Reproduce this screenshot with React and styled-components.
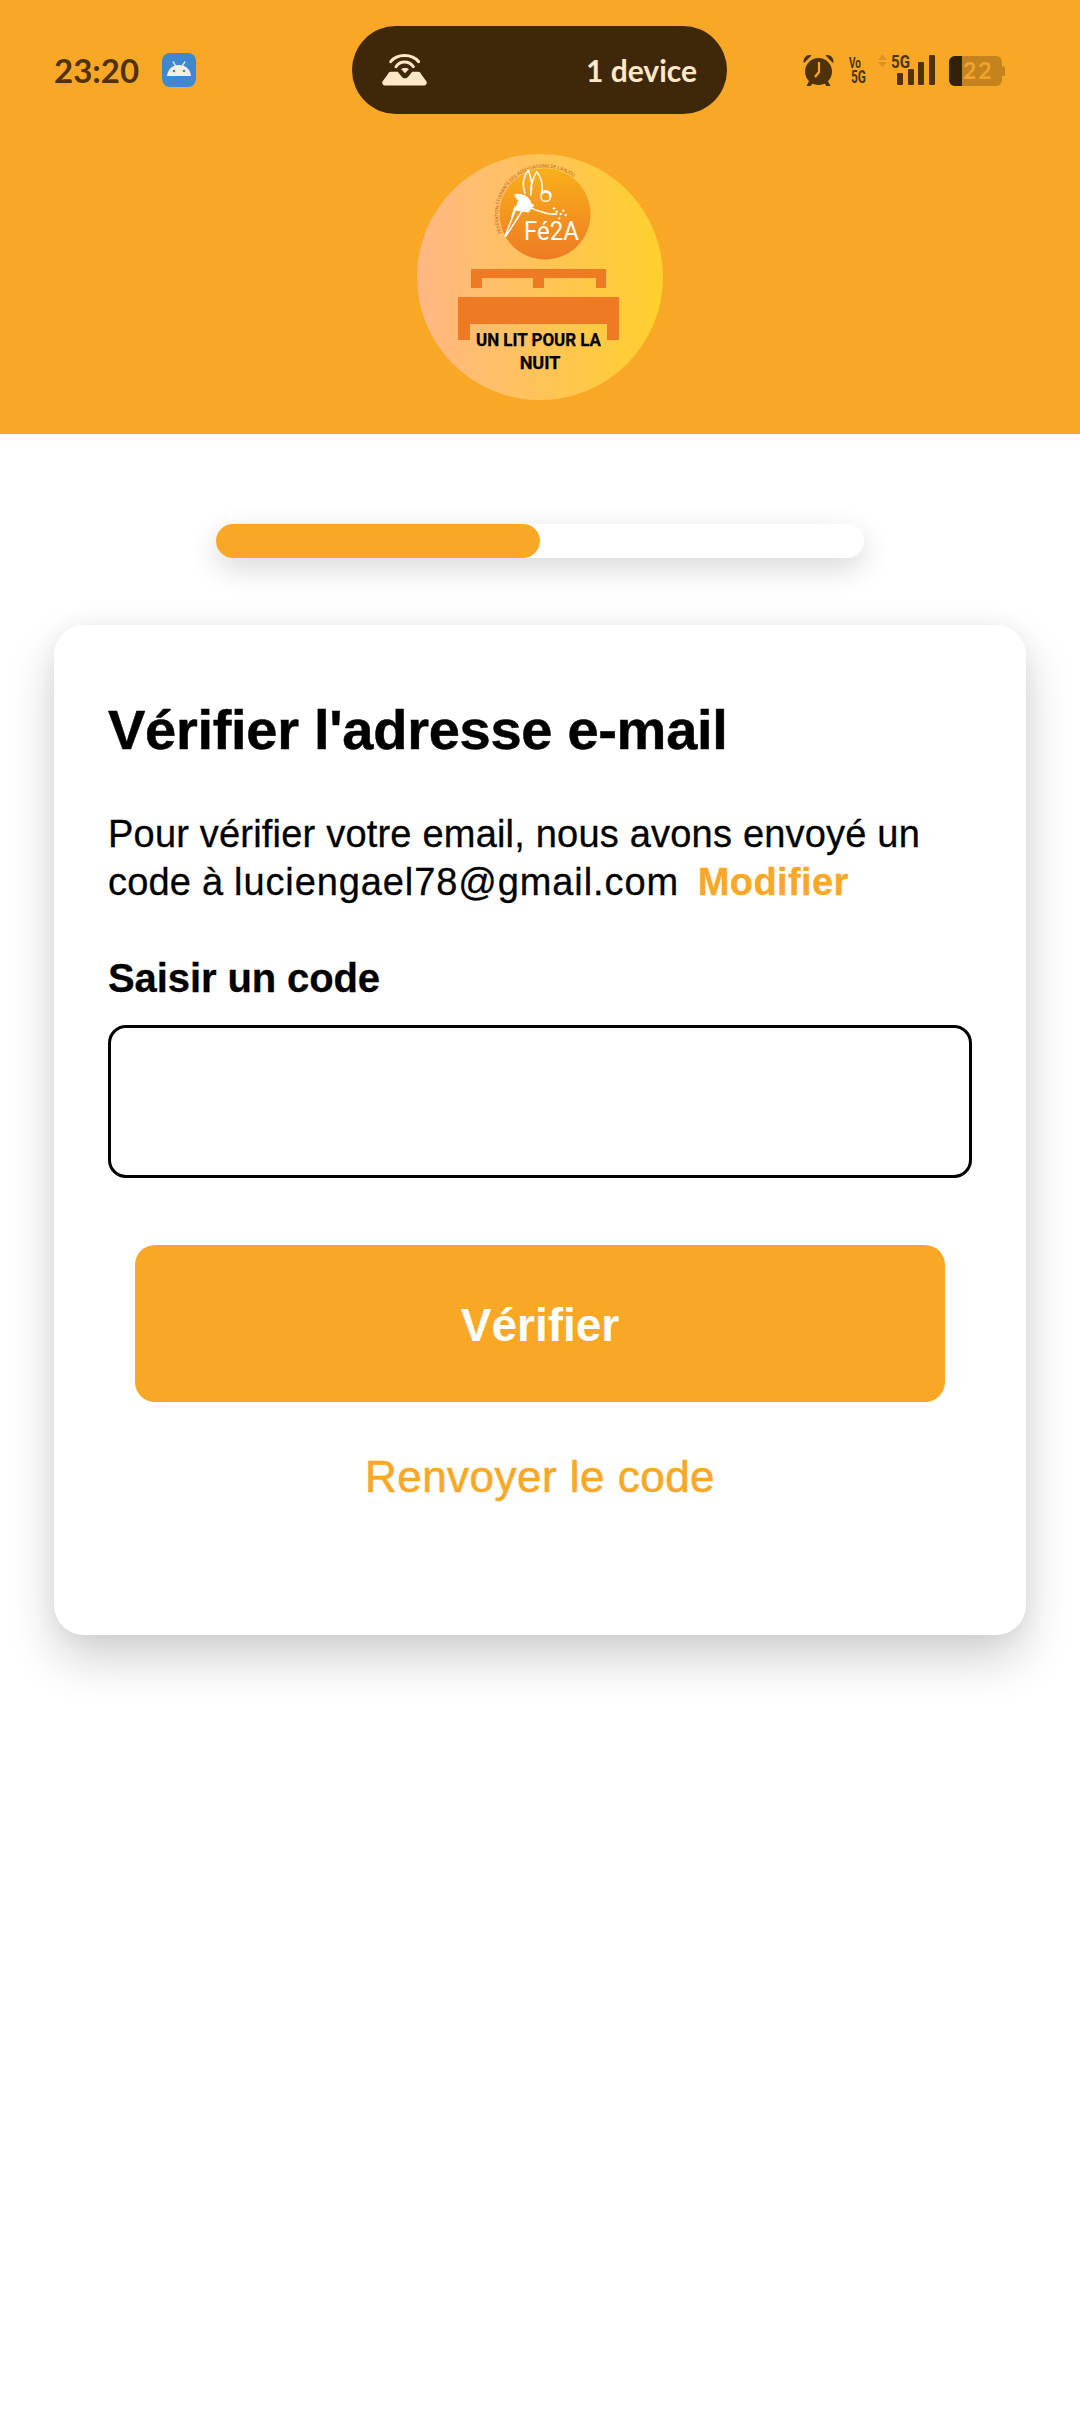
import React from 'react';
import styled, { createGlobalStyle } from 'styled-components';

const ORANGE = '#F9A826';

const Global = createGlobalStyle`
  html, body { margin: 0; padding: 0; background: #fff; }
  * { box-sizing: border-box; }
  body { font-family: "Liberation Sans", Arial, sans-serif; color: #000; }
`;
const Page = styled.div`
  width: 1080px;
  height: 2412px;
  overflow: hidden;
  background: #fff;
`;
const Header = styled.header`
  height: 434px;
  background: ${ORANGE};
  padding-top: 26px;
  display: flex;
  flex-direction: column;
  align-items: center;
`;
const StatusBar = styled.div`
  width: 100%;
  height: 88px;
  display: grid;
  grid-template-columns: 352px 375px 1fr;
  align-items: center;
`;
const StatusLeft = styled.div`
  display: flex;
  align-items: center;
  padding-left: 54px;
  gap: 24px;
`;
const Clock = styled.span`
  font-family: "Lato", sans-serif;
  font-weight: 700;
  font-size: 33px;
  line-height: 40px;
  color: #4f3208;
  width: 84px;
  white-space: nowrap;
`;
const AppBadge = styled.div`
  width: 34px;
  height: 34px;
  border-radius: 8px;
  background: #3f88d0;
  display: flex;
  align-items: center;
  justify-content: center;
`;
const Pill = styled.div`
  height: 88px;
  border-radius: 44px;
  background: #3f2809;
  display: flex;
  align-items: center;
  justify-content: space-between;
  padding: 0 30px;
  color: #ffe8c8;
`;
const PillText = styled.span`
  font-family: "Lato", sans-serif;
  font-weight: 700;
  font-size: 30px;
`;
const StatusRight = styled.div`
  display: flex;
  align-items: center;
  padding-left: 76px;
`;
const Logo = styled.svg`
  display: block;
  margin-top: 40px;
`;
const Main = styled.main`
  display: flex;
  flex-direction: column;
  align-items: center;
  padding-top: 90px;
`;
const Track = styled.div`
  width: 648px;
  height: 34px;
  border-radius: 17px;
  background: #fff;
  box-shadow: 0 10px 30px rgba(0, 0, 0, 0.16);
`;
const Fill = styled.div`
  width: 50%;
  height: 100%;
  border-radius: 17px;
  background: ${ORANGE};
`;
const Card = styled.section`
  margin-top: 67px;
  width: 972px;
  height: 1010px;
  border-radius: 30px;
  background: #fff;
  box-shadow: 0 24px 48px rgba(0, 0, 0, 0.18), 0 0 24px rgba(0, 0, 0, 0.05);
  padding: 75px 54px 0;
  display: flex;
  flex-direction: column;
`;
const Title = styled.h1`
  margin: 0;
  font-size: 56px;
  line-height: 60px;
  font-weight: 700;
  letter-spacing: -0.28px;
  -webkit-text-stroke: 0.5px #000;
`;
const Para = styled.p`
  margin: 50px 0 0;
  font-size: 38px;
  line-height: 48px;
  font-weight: 400;
  letter-spacing: 0.2px;
  -webkit-text-stroke: 0.3px;
`;
const Email = styled.span`
  letter-spacing: 0.9px;
`;
const Link = styled.a`
  color: ${ORANGE};
  font-weight: 700;
  letter-spacing: 0.4px;
  margin-left: 8px;
`;
const Label = styled.label`
  margin-top: 47px;
  font-size: 40px;
  line-height: 50px;
  font-weight: 700;
  letter-spacing: -0.1px;
  -webkit-text-stroke: 0.3px #000;
`;
const Field = styled.div`
  margin-top: 22px;
  width: 864px;
  height: 153px;
  border: 3px solid #000;
  border-radius: 18px;
`;
const Primary = styled.div`
  margin: 67px auto 0;
  width: 810px;
  height: 157px;
  padding-top: 2px;
  border-radius: 20px;
  background: ${ORANGE};
  color: #fff;
  font-size: 46px;
  font-weight: 700;
  display: flex;
  align-items: center;
  justify-content: center;
`;
const Resend = styled.div`
  margin-top: 45px;
  text-align: center;
  color: ${ORANGE};
  font-size: 44px;
  line-height: 60px;
  letter-spacing: 0.48px;
  -webkit-text-stroke: 0.6px ${ORANGE};
`;
const BarIcons = styled.svg`
  margin-left: 15px;
`;
const BatteryIcon = styled.svg`
  margin-left: 13px;
  margin-top: 2px;
`;

const Android = () => (
  <svg width="26" height="18" viewBox="0 0 26 18">
    <path d="M1 15C1.500 8.500 6.500 4 13 4S24.500 8.500 25 15z" fill="#f5efe0" />
    <path d="M7 .5l3 5M19 .5l-3 5" stroke="#f5efe0" strokeWidth="1.400" fill="none" />
    <circle cx="8" cy="10" r="1.300" fill="#3f88d0" />
    <circle cx="18" cy="10" r="1.300" fill="#3f88d0" />
  </svg>
);

const Hotspot = () => (
  <svg width="45" height="34" viewBox="0 0 45 34">
    <path d="M8.700 8.700C15 .5 30 .5 36.700 8.700" stroke="#ffe8c8" strokeWidth="3" fill="none" strokeLinecap="round" />
    <path d="M14 13.700C18 7.500 27 7.500 31.300 13.700" stroke="#ffe8c8" strokeWidth="3" fill="none" strokeLinecap="round" />
    <path d="M19 16c2-1.500 6-1.500 8 0l-4 4.300z" fill="#ffe8c8" />
    <path d="M9 18.700H15.700C18 21 20 25.300 23 25.300S28 21 30.300 18.700H36C37.500 18.700 38.500 19.500 39 21L44.500 28.500C45.300 30.500 44 32.500 42 32.500H3C1 32.500-.3 30.500.5 28.500L6 21C6.500 19.500 7.500 18.700 9 18.700z" fill="#ffe8c8" />
  </svg>
);

const Alarm = () => (
  <svg width="31" height="33" viewBox="0 0 31 33">
    <circle cx="15.500" cy="17.500" r="13.500" fill="#4f3208" />
    <path d="M16 8v10l-4 5" stroke="#f9a826" strokeWidth="2.200" fill="none" />
    <path d="M.5 8C.5 3 4.500 0 8.500 1.500L1 9zM30.500 8c0-5-4-8-8-6.500L30 9z" fill="#4f3208" />
    <path d="M6 27l-2.500 5h4L10 29zM25 27l2.500 5h-4L21 29z" fill="#4f3208" />
  </svg>
);

const Network = () => (
  <BarIcons width="87" height="34" viewBox="0 0 87 34">
    <text x="0" y="15" fontFamily="Roboto, sans-serif" fontWeight="700" fontSize="15.500" fill="#4f3208" textLength="12" lengthAdjust="spacingAndGlyphs">Vo</text>
    <text x="2" y="30" fontFamily="Roboto, sans-serif" fontWeight="700" fontSize="18" fill="#4f3208" textLength="15" lengthAdjust="spacingAndGlyphs">5G</text>
    <path d="M29 7l4.500-5.500L38 7zM29 9l4.500 5.500L38 9z" fill="#dc9322" />
    <text x="42" y="15" fontFamily="Roboto, sans-serif" fontWeight="700" fontSize="18" fill="#4f3208" textLength="19" lengthAdjust="spacingAndGlyphs">5G</text>
    <rect x="48" y="20" width="6" height="12" rx="1" fill="#4f3208" />
    <rect x="59" y="16" width="6" height="16" rx="1" fill="#4f3208" />
    <rect x="69" y="9" width="6" height="23" rx="1" fill="#4f3208" />
    <rect x="80" y="2" width="6" height="30" rx="1" fill="#4f3208" />
  </BarIcons>
);

const Battery = () => (
  <BatteryIcon width="56" height="30" viewBox="0 0 56 30">
    <rect x="0" y="0" width="53" height="30" rx="6" fill="#c4831c" />
    <rect x="53" y="10" width="3" height="10" rx="1.500" fill="#c4831c" />
    <path d="M6 0h7v30H6a6 6 0 0 1-6-6V6a6 6 0 0 1 6-6z" fill="#33200a" />
    <text x="14" y="23" fontFamily="Lato, sans-serif" fontWeight="700" fontSize="23" fill="#f0a52a" letterSpacing="2">22</text>
  </BatteryIcon>
);

const LogoArt = () => (
  <Logo width="246" height="246" viewBox="0 0 246 246">
    <defs>
      <linearGradient id="disc" x1="0" x2="1" y1="0" y2="0">
        <stop offset="0" stopColor="#ffb785" />
        <stop offset="1" stopColor="#ffd02c" />
      </linearGradient>
      <linearGradient id="ball" x1="0" x2="0" y1="0" y2="1">
        <stop offset="0" stopColor="#f9b01a" />
        <stop offset="1" stopColor="#ee7b24" />
      </linearGradient>
      <path id="arc" d="M85 79 A 47 47 0 0 1 164 30" />
    </defs>
    <circle cx="123" cy="123" r="123" fill="url(#disc)" />
    <circle cx="128" cy="60" r="45.500" fill="url(#ball)" />
    <text fontFamily="Roboto, sans-serif" fontSize="4.700" fill="#c05a1e">
      <textPath href="#arc">FÉDÉRATION ÉTUDIANTE DES ASSOCIATIONS DE L'ANJOU</textPath>
    </text>
    <g transform="translate(-17 -14) scale(.3333)" stroke="#fff" strokeWidth="4.500" strokeLinejoin="round" strokeLinecap="round" fill="none">
      <path d="M375 160C365 135 370 110 385 90C395 115 398 140 392 165" />
      <path d="M392 150C395 125 402 110 410 95C425 115 430 135 425 155" />
      <path d="M345 165C365 160 385 170 392 190C375 195 355 185 345 165z" fill="#fff" />
      <path d="M355 185L400 195L385 215L350 210z" fill="#fff" />
      <path d="M315 288L352 195L368 210L318 288z" />
      <path d="M345 200L335 235" />
      <circle cx="437" cy="170" r="14" />
      <path d="M425 160C432 150 450 152 452 168" strokeWidth="7" />
      <path d="M395 205C420 215 445 225 470 222" />
      <g fill="#fff" stroke="none">
        <circle cx="462" cy="205" r="3.500" />
        <circle cx="470" cy="215" r="3.500" />
        <circle cx="482" cy="222" r="3.500" />
        <circle cx="490" cy="212" r="3.500" />
        <circle cx="497" cy="225" r="3.500" />
        <circle cx="478" cy="235" r="3.500" />
      </g>
    </g>
    <text x="107" y="86" fontFamily="Roboto, sans-serif" fontSize="26" fontWeight="400" fill="#fff" textLength="55" lengthAdjust="spacingAndGlyphs">Fé2A</text>
    <path d="M54 115H189V134H179V124H127V134H116V124H65V134H54z" fill="#ef7a24" />
    <path d="M41 143h161v43h-12v-16H53v16H41z" fill="#ef7a24" />
    <text x="121.500" y="192" textAnchor="middle" fontFamily="Roboto, sans-serif" fontWeight="700" fontSize="18" fill="#000" stroke="#000" strokeWidth=".25" textLength="125" lengthAdjust="spacingAndGlyphs">UN LIT POUR LA</text>
    <text x="123" y="215" textAnchor="middle" fontFamily="Roboto, sans-serif" fontWeight="700" fontSize="18" fill="#000" stroke="#000" strokeWidth=".25">NUIT</text>
  </Logo>
);

export default function App() {
  return (
    <Page>
      <Global />
      <Header>
        <StatusBar>
          <StatusLeft>
            <Clock>23:20</Clock>
            <AppBadge><Android /></AppBadge>
          </StatusLeft>
          <Pill>
            <Hotspot />
            <PillText>1 device</PillText>
          </Pill>
          <StatusRight>
            <Alarm />
            <Network />
            <Battery />
          </StatusRight>
        </StatusBar>
        <LogoArt />
      </Header>
      <Main>
        <Track><Fill /></Track>
        <Card>
          <Title>Vérifier l'adresse e-mail</Title>
          <Para>
            Pour vérifier votre email, nous avons envoyé un code à <Email>luciengael78@gmail.com</Email> <Link>Modifier</Link>
          </Para>
          <Label>Saisir un code</Label>
          <Field />
          <Primary>Vérifier</Primary>
          <Resend>Renvoyer le code</Resend>
        </Card>
      </Main>
    </Page>
  );
}
